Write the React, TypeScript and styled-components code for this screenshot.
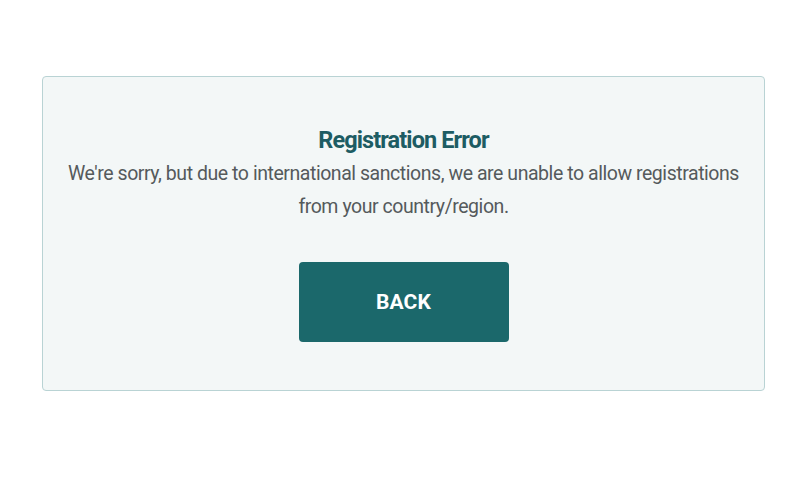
import React from "react";
import styled, { createGlobalStyle } from "styled-components";

const Global = createGlobalStyle`
  html, body { margin: 0; padding: 0; background: #ffffff; }
  body { font-family: Roboto, "Liberation Sans", sans-serif; }
`;

const Page = styled.div`
  width: 800px;
  height: 500px;
  padding: 76px 35px 0 42px;
  box-sizing: border-box;
`;

const Card = styled.div`
  width: 723px;
  height: 315px;
  box-sizing: border-box;
  background: #f3f7f7;
  border: 1px solid #b9d3d4;
  border-radius: 4px;
  display: flex;
  flex-direction: column;
  align-items: center;
  padding-top: 48px;
`;

const Title = styled.h2`
  margin: 0;
  font-size: 23.5px;
  line-height: 30px;
  font-weight: 700;
  color: #1d5c63;
  letter-spacing: -0.9px;
`;

const Message = styled.p`
  margin: 2px 0 0;
  width: 700px;
  text-align: center;
  font-size: 19.5px;
  line-height: 33px;
  color: #555a5c;
  letter-spacing: -0.45px;
`;

const Button = styled.button`
  margin-top: 39px;
  width: 210px;
  height: 80px;
  border: none;
  border-radius: 4px;
  background: #1b686b;
  color: #ffffff;
  font-family: Roboto, "Liberation Sans", sans-serif;
  font-weight: 700;
  font-size: 21px;
  letter-spacing: 0.2px;
  cursor: pointer;
`;

export default function App() {
  return (
    <>
      <Global />
      <Page>
        <Card>
          <Title>Registration Error</Title>
          <Message>
            We're sorry, but due to international sanctions, we are unable to allow registrations from your country/region.
          </Message>
          <Button>BACK</Button>
        </Card>
      </Page>
    </>
  );
}
